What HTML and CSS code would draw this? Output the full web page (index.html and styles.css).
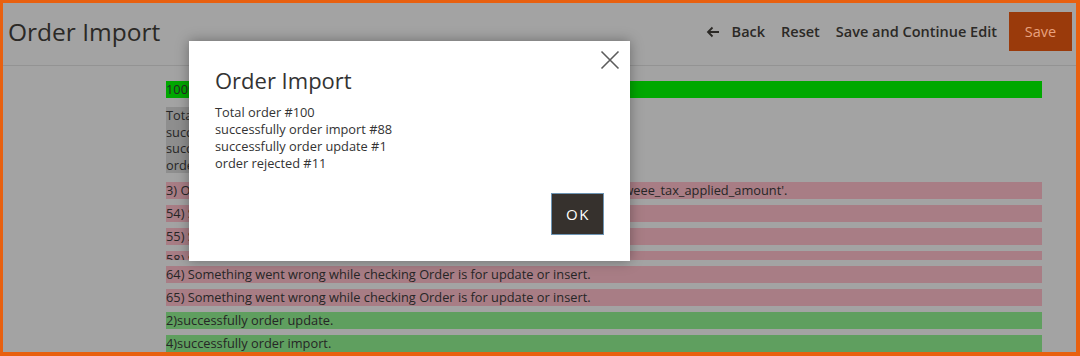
FILE: index.html
```html
<!DOCTYPE html>
<html lang="en">
<head>
<meta charset="utf-8">
<title>Order Import</title>
<link rel="stylesheet" href="styles.css">
</head>
<body>
<div class="frame">
  <header class="page-header">
    <h1 class="page-title">Order Import</h1>
    <nav class="page-actions">
      <button class="action back">
        <svg class="arrow" viewBox="0 0 14 12" width="14" height="12" aria-hidden="true">
          <path d="M13 6H2M6.5 1.5L2 6l4.5 4.5" fill="none" stroke="#2b2926" stroke-width="1.8"/>
        </svg>
        Back
      </button>
      <button class="action">Reset</button>
      <button class="action">Save and Continue Edit</button>
      <button class="action primary">Save</button>
    </nav>
  </header>

  <main class="messages">
    <div class="msg progress">100%</div>
    <div class="summary">
      <div>Total order #100</div>
      <div>successfully order import #88</div>
      <div>successfully order update #1</div>
      <div>order rejected #11</div>
    </div>
    <div class="msg error">3) Order #003 SQLSTATE[42S22]: Column not found: 1054 Unknown column 'weee_tax_applied_amount'.</div>
    <div class="msg error">54) Something went wrong while checking Order is for update or insert.</div>
    <div class="msg error">55) Something went wrong while checking Order is for update or insert.</div>
    <div class="msg error short">58) Something went wrong while checking Order is for update or insert.</div>
    <div class="msg error">64) Something went wrong while checking Order is for update or insert.</div>
    <div class="msg error">65) Something went wrong while checking Order is for update or insert.</div>
    <div class="msg success">2)successfully order update.</div>
    <div class="msg success">4)successfully order import.</div>
  </main>

  <aside class="modal" role="dialog">
    <button class="modal-close" aria-label="Close">
      <svg viewBox="0 0 20 20" width="20" height="20" aria-hidden="true">
        <path d="M1.5 1.5L18.5 18.5M18.5 1.5L1.5 18.5" fill="none" stroke="#5c5c5c" stroke-width="1.6"/>
      </svg>
    </button>
    <h2 class="modal-title">Order Import</h2>
    <div class="modal-body">
      <div>Total order #100</div>
      <div>successfully order import #88</div>
      <div>successfully order update #1</div>
      <div>order rejected #11</div>
    </div>
    <footer class="modal-footer">
      <button class="ok">OK</button>
    </footer>
  </aside>
</div>
</body>
</html>
```

FILE: styles.css
```css
* { box-sizing: border-box; }

html, body {
  margin: 0;
  padding: 0;
}

body {
  font-family: "Open Sans", "Noto Sans", "DejaVu Sans", sans-serif;
  color: #262626;
}

.frame {
  position: relative;
  width: 1080px;
  height: 356px;
  overflow: hidden;
  background: #a3a3a3;
  border-style: solid;
  border-color: #e8600f;
  border-width: 3px 4px 4px 3px;
}

.page-header {
  display: flex;
  justify-content: space-between;
  align-items: flex-start;
  height: 63px;
  padding: 9px 4px 0 5px;
  border-bottom: 1px solid #939393;
}

.page-title {
  margin: 0;
  font-size: 24.5px;
  font-weight: 400;
  line-height: 39px;
  color: #2b2926;
}

.page-actions {
  display: flex;
  align-items: center;
  height: 39px;
}

.action {
  display: flex;
  align-items: center;
  gap: 12px;
  border: 0;
  background: none;
  padding: 0;
  margin-left: 16px;
  font-family: inherit;
  font-size: 14.5px;
  font-weight: 600;
  color: #2b2926;
  line-height: 39px;
}

.action.back { margin-left: 0; }

.action.primary {
  margin-left: 12px;
  width: 63px;
  height: 39px;
  justify-content: center;
  background: #9a3a0b;
  color: #e9a27f;
  font-weight: 500;
}

.messages {
  display: flex;
  flex-direction: column;
  align-items: flex-start;
  padding: 15px 34px 0 163px;
  font-size: 12.8px;
  line-height: 17px;
}

.msg {
  align-self: stretch;
  height: 17px;
  margin-bottom: 6px;
  white-space: nowrap;
  overflow: hidden;
}

.progress {
  background: #00a800;
  height: 17px;
  margin-bottom: 9px;
}

.summary {
  background: #8e8e8e;
  padding: 0 10px 0 0;
  margin-bottom: 9px;
  line-height: 16.5px;
}

.error { background: #a87d85; }
.error.short { height: 9px; }
.success { background: #5f9f5f; }

.modal {
  position: absolute;
  left: 186px;
  top: 38px;
  width: 441px;
  height: 220px;
  background: #ffffff;
  box-shadow: 0 0 12px rgba(0, 0, 0, 0.35);
  padding: 23px 26px 26px 26px;
  display: flex;
  flex-direction: column;
}

.modal-close {
  position: absolute;
  top: 9px;
  right: 10px;
  width: 20px;
  height: 20px;
  padding: 0;
  border: 0;
  background: none;
}

.modal-close svg { display: block; }

.modal-title {
  margin: 0;
  font-size: 22px;
  font-weight: 400;
  line-height: 32px;
  color: #333333;
}

.modal-body {
  margin-top: 8px;
  font-size: 12.8px;
  line-height: 17px;
  color: #333333;
}

.modal-footer {
  margin-top: auto;
  display: flex;
  justify-content: flex-end;
}

.ok {
  width: 53px;
  height: 42px;
  background: #36312d;
  border: 1px solid #6d94b3;
  color: #ffffff;
  font-family: inherit;
  font-size: 15px;
  font-weight: 500;
  letter-spacing: 1.5px;
  padding: 0 0 0 1px;
}
```
